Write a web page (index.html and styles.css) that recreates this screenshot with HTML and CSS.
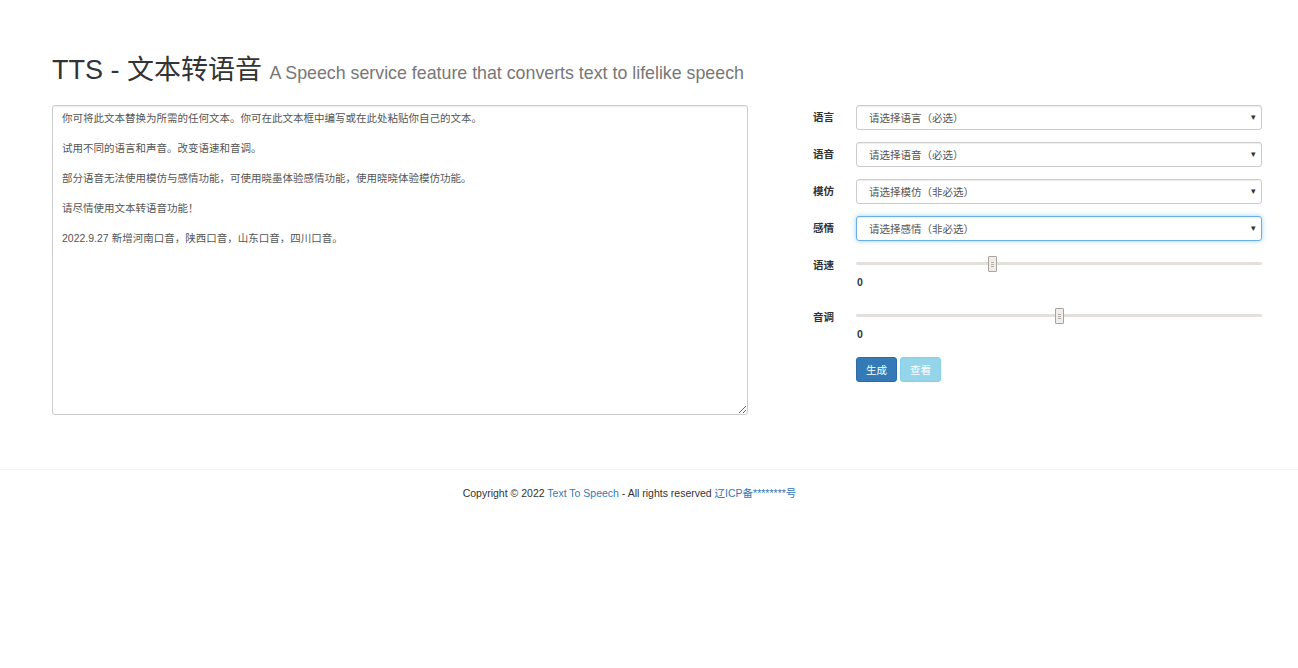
FILE: index.html
```html
<!DOCTYPE html>
<html lang="zh-CN">
<head>
  <meta charset="UTF-8" />
  <meta name="viewport" content="width=device-width, initial-scale=1.0"/>
  <title>TTS - 文本转语音</title>
  <link rel="stylesheet" href="styles.css">
</head>
<body>

  <div class="page">
    <h1 class="title">TTS - 文本转语音 <small>A Speech service feature that converts text to lifelike speech</small></h1>

    <div class="main">
      <div class="left">
        <textarea class="text-input">你可将此文本替换为所需的任何文本。你可在此文本框中编写或在此处粘贴你自己的文本。

试用不同的语言和声音。改变语速和音调。

部分语音无法使用模仿与感情功能，可使用晓墨体验感情功能，使用晓晓体验模仿功能。

请尽情使用文本转语音功能！

2022.9.27 新增河南口音，陕西口音，山东口音，四川口音。</textarea>
      </div>

      <form class="settings">
        <div class="form-row">
          <label>语言</label>
          <div class="select-wrap">
            <select><option>请选择语言（必选）</option></select>
          </div>
        </div>
        <div class="form-row">
          <label>语音</label>
          <div class="select-wrap">
            <select><option>请选择语音（必选）</option></select>
          </div>
        </div>
        <div class="form-row">
          <label>模仿</label>
          <div class="select-wrap">
            <select><option>请选择模仿（非必选）</option></select>
          </div>
        </div>
        <div class="form-row">
          <label>感情</label>
          <div class="select-wrap">
            <select class="focused"><option>请选择感情（非必选）</option></select>
          </div>
        </div>

        <div class="form-row slider-row">
          <label>语速</label>
          <div>
            <input type="range" class="slider" min="-100" max="200" value="0">
            <div class="slider-value">0</div>
          </div>
        </div>
        <div class="form-row slider-row">
          <label>音调</label>
          <div>
            <input type="range" class="slider" min="-50" max="50" value="0">
            <div class="slider-value">0</div>
          </div>
        </div>

        <div class="form-row">
          <span></span>
          <div class="buttons">
            <button type="button" class="btn btn-primary">生成</button>
            <button type="button" class="btn btn-info" disabled>查看</button>
          </div>
        </div>
      </form>
    </div>
  </div>

  <footer>
    Copyright &copy; 2022 <a href="#">Text To Speech</a> - All rights reserved <a href="#">辽ICP备********号</a>
  </footer>

</body>
</html>
```

FILE: styles.css
```css
* {
  box-sizing: border-box;
}

:root {
  --text: #333;
  --muted: #777;
  --input-text: #555;
  --border: #ccc;
  --primary: #337ab7;
  --font: "Liberation Sans", "Noto Sans CJK SC", sans-serif;
}

body {
  margin: 0;
  font-family: var(--font);
  font-size: 10.5px;
  line-height: 15px;
  color: var(--text);
  background-color: #fff;
}

.page {
  padding: 0 36px 0 52px;
}

.title {
  margin: 0;
  padding-top: 55px;
  height: 105px;
  font-size: 27px;
  font-weight: normal;
  line-height: 30px;
  color: var(--text);
}

.title small {
  font-size: 17.8px;
  font-weight: normal;
  color: var(--muted);
}

.main {
  display: flex;
  justify-content: space-between;
  align-items: flex-start;
}

.left {
  width: 696px;
}

.text-input {
  display: block;
  width: 100%;
  height: 310px;
  margin: 0;
  padding: 5px 9px 4px;
  font-family: var(--font);
  font-size: 10.5px;
  line-height: 15px;
  color: var(--input-text);
  border: 1px solid var(--border);
  border-radius: 3px;
  box-shadow: inset 0 1px 1px rgba(0, 0, 0, 0.075);
  resize: vertical;
  outline: none;
}

.settings {
  width: 484px;
  margin: 0;
}

.form-row {
  display: grid;
  grid-template-columns: 56px 406px;
  column-gap: 22px;
  margin-bottom: 12px;
}

.form-row label {
  text-align: right;
  font-weight: bold;
  padding-top: 5px;
  color: var(--text);
}

.select-wrap {
  position: relative;
}

.select-wrap::after {
  content: "▾";
  position: absolute;
  right: 6px;
  top: 5px;
  font-size: 9px;
  color: #333;
  pointer-events: none;
}

.select-wrap select {
  display: block;
  width: 100%;
  height: 25px;
  padding: 1px 12px 0;
  font-family: var(--font);
  font-size: 10.5px;
  color: var(--input-text);
  background-color: #fff;
  border: 1px solid var(--border);
  border-radius: 3px;
  box-shadow: inset 0 1px 1px rgba(0, 0, 0, 0.075);
  appearance: none;
  -webkit-appearance: none;
  outline: none;
}

.select-wrap select.focused {
  border-color: #66afe9;
  box-shadow: inset 0 1px 1px rgba(0, 0, 0, 0.075), 0 0 5px rgba(102, 175, 233, 0.6);
}

.slider-row {
  margin-bottom: 15px;
}

.slider {
  display: block;
  width: 100%;
  height: 21px;
  margin: 0;
  background: transparent;
  -webkit-appearance: none;
  appearance: none;
  outline: none;
}

.slider::-webkit-slider-runnable-track {
  height: 3px;
  background-color: #e3dfda;
  border-radius: 2px;
}

.slider::-webkit-slider-thumb {
  -webkit-appearance: none;
  width: 9px;
  height: 16px;
  margin-top: -6.5px;
  border: 1px solid #a9a39d;
  border-radius: 1px;
  background:
    linear-gradient(#b3aea8, #b3aea8) center 5px / 3px 1px no-repeat,
    linear-gradient(#b3aea8, #b3aea8) center 7px / 3px 1px no-repeat,
    linear-gradient(#b3aea8, #b3aea8) center 9px / 3px 1px no-repeat,
    #efedea;
}

.slider-value {
  font-weight: bold;
  padding-left: 1px;
  padding-top: 1px;
}

.buttons {
  display: flex;
  gap: 3px;
}

.btn {
  height: 25px;
  padding: 0 9px;
  font-family: var(--font);
  font-size: 10.5px;
  color: #fff;
  border: 1px solid transparent;
  border-radius: 3px;
  cursor: pointer;
}

.btn-primary {
  background-color: var(--primary);
  border-color: #2e6da4;
}

.btn-info {
  background-color: #5bc0de;
  border-color: #46b8da;
  opacity: 0.65;
  cursor: not-allowed;
}

footer {
  margin-top: 54px;
  padding: 16px 39px 0 0;
  border-top: 1px solid #f3f3f3;
  text-align: center;
  font-size: 10.5px;
  color: var(--text);
}

footer a {
  color: var(--primary);
  text-decoration: none;
}
```
